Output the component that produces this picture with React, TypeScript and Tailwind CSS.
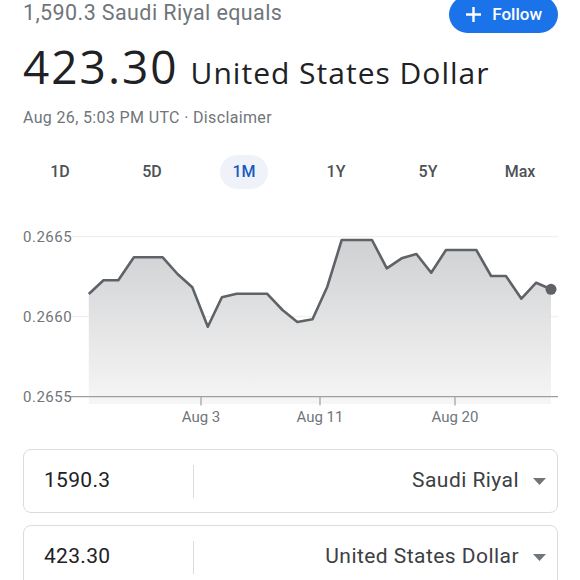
import React from 'react'

const TABS = ['1D', '5D', '1M', '1Y', '5Y', 'Max']

const POINTS: [number, number][] = [
  [88.8, 105], [103.5, 91.3], [118.3, 91.3], [133.9, 68.3], [162.7, 68.3], [177.5, 85],
  [192.3, 98.3], [207.8, 137.7], [221.9, 108.3], [236.7, 104.7], [267, 104.7], [282.5, 121],
  [297.3, 133], [312.5, 130.3], [327.3, 97.7], [341.7, 51], [372, 51], [386.8, 79.3],
  [401.6, 69.3], [416.4, 65], [431.2, 83.7], [446, 61], [476.3, 61], [491.1, 87],
  [505.9, 87], [521.4, 109.7], [536.2, 93.7], [551, 100.3],
]

function Chart() {
  const line = POINTS.map(([x, y]) => `${x},${y}`).join(' ')
  const area = `88.8,215 ${line} 551,215`
  return (
    <svg width="580" height="245" viewBox="0 0 580 245" className="block">
      <defs>
        <linearGradient id="fill" x1="0" y1="50" x2="0" y2="215" gradientUnits="userSpaceOnUse">
          <stop offset="0" stopColor="#cfd0d2" />
          <stop offset="1" stopColor="#f6f6f6" />
        </linearGradient>
      </defs>
      <line x1="72" x2="558" y1="47.7" y2="47.7" stroke="#ececec" strokeWidth="1" />
      <line x1="72" x2="558" y1="127.7" y2="127.7" stroke="#ececec" strokeWidth="1" />
      <polygon points={area} fill="url(#fill)" />
      <polyline points={line} fill="none" stroke="#5f6368" strokeWidth="2.6" strokeLinejoin="round" />
      <circle cx="551" cy="100.3" r="5.5" fill="#5f6368" />
      <line x1="70" x2="558" y1="207.7" y2="207.7" stroke="#9aa0a6" strokeWidth="1.2" />
      {[201, 320, 455].map((x) => (
        <line key={x} x1={x} x2={x} y1="207.7" y2="216.5" stroke="#9aa0a6" strokeWidth="1.2" />
      ))}
      <g fill="#70757a" fontFamily="Roboto, sans-serif" fontSize="15">
        <text x="23" y="52.7" letterSpacing="0.5">0.2665</text>
        <text x="23" y="132.7" letterSpacing="0.5">0.2660</text>
        <text x="23" y="212.7" letterSpacing="0.5">0.2655</text>
        <text x="201" y="233.3" textAnchor="middle">Aug 3</text>
        <text x="320" y="233.3" textAnchor="middle">Aug 11</text>
        <text x="455" y="233.3" textAnchor="middle">Aug 20</text>
      </g>
    </svg>
  )
}

function Caret() {
  return (
    <svg width="13" height="7" viewBox="0 0 13 7" className="shrink-0">
      <path d="M0 0h13L6.5 7z" fill="#70757a" />
    </svg>
  )
}

function ConvertRow({ amount, currency }: { amount: string; currency: string }) {
  return (
    <div className="flex h-[64px] items-center rounded-[8px] border border-[#dadce0] bg-white">
      <div className="w-[169px] shrink-0 pl-[20px] text-[21px] tracking-[0.3px] text-[#202124]">{amount}</div>
      <div className="h-[33px] w-px bg-[#dadce0]" />
      <div className="flex flex-1 items-center justify-end gap-[14px] pr-[11px]">
        <span className="text-[21px] tracking-[0.45px] text-[#3c4043]">{currency}</span>
        <Caret />
      </div>
    </div>
  )
}

export default function App() {
  return (
    <div className="h-[580px] w-[580px] overflow-hidden bg-white font-['Roboto',sans-serif]">
      <div className="px-[23px]">
        {/* Header row */}
        <div className="flex h-[33px] items-start justify-between">
          <p className="text-[21.5px] leading-[26px] tracking-[0.4px] text-[#70757a]">1,590.3 Saudi Riyal equals</p>
          <button className="-mr-px -mt-[4px] flex h-[37px] items-center gap-[11px] rounded-full bg-[#1a73e8] pl-[17px] pr-[16px] text-[17px] font-medium text-white">
            <svg width="15" height="15" viewBox="0 0 15 15">
              <path d="M7.5 0v15M0 7.5h15" stroke="white" strokeWidth="2.4" />
            </svg>
            Follow
          </button>
        </div>

        {/* Result */}
        <div className="mt-[5px] flex h-[56px] items-baseline font-['Open_Sans',sans-serif] leading-[56px] text-[#202124]">
          <span className="text-[46px] tracking-[2px]">423.30</span>
          <span className="ml-[12px] text-[30px] tracking-[1px]">United States Dollar</span>
        </div>

        <p className="mt-[14px] text-[16px] leading-[20px] tracking-[0.35px] text-[#70757a]">Aug 26, 5:03 PM UTC · Disclaimer</p>
      </div>

      {/* Range tabs */}
      <div className="mx-[14px] mt-[27px] grid grid-cols-6">
        {TABS.map((t) => (
          <div key={t} className="flex justify-center">
            <div
              className={`flex h-[34px] w-[48px] items-center justify-center rounded-full text-[16px] font-medium ${
                t === '1M' ? 'bg-[#eff3f9] text-[#185abc]' : 'text-[#4d5156]'
              }`}
            >
              {t}
            </div>
          </div>
        ))}
      </div>

      <Chart />

      {/* Converter */}
      <div className="mt-[15px] flex flex-col gap-[12px] pl-[23px] pr-[22px]">
        <ConvertRow amount="1590.3" currency="Saudi Riyal" />
        <ConvertRow amount="423.30" currency="United States Dollar" />
      </div>
    </div>
  )
}
